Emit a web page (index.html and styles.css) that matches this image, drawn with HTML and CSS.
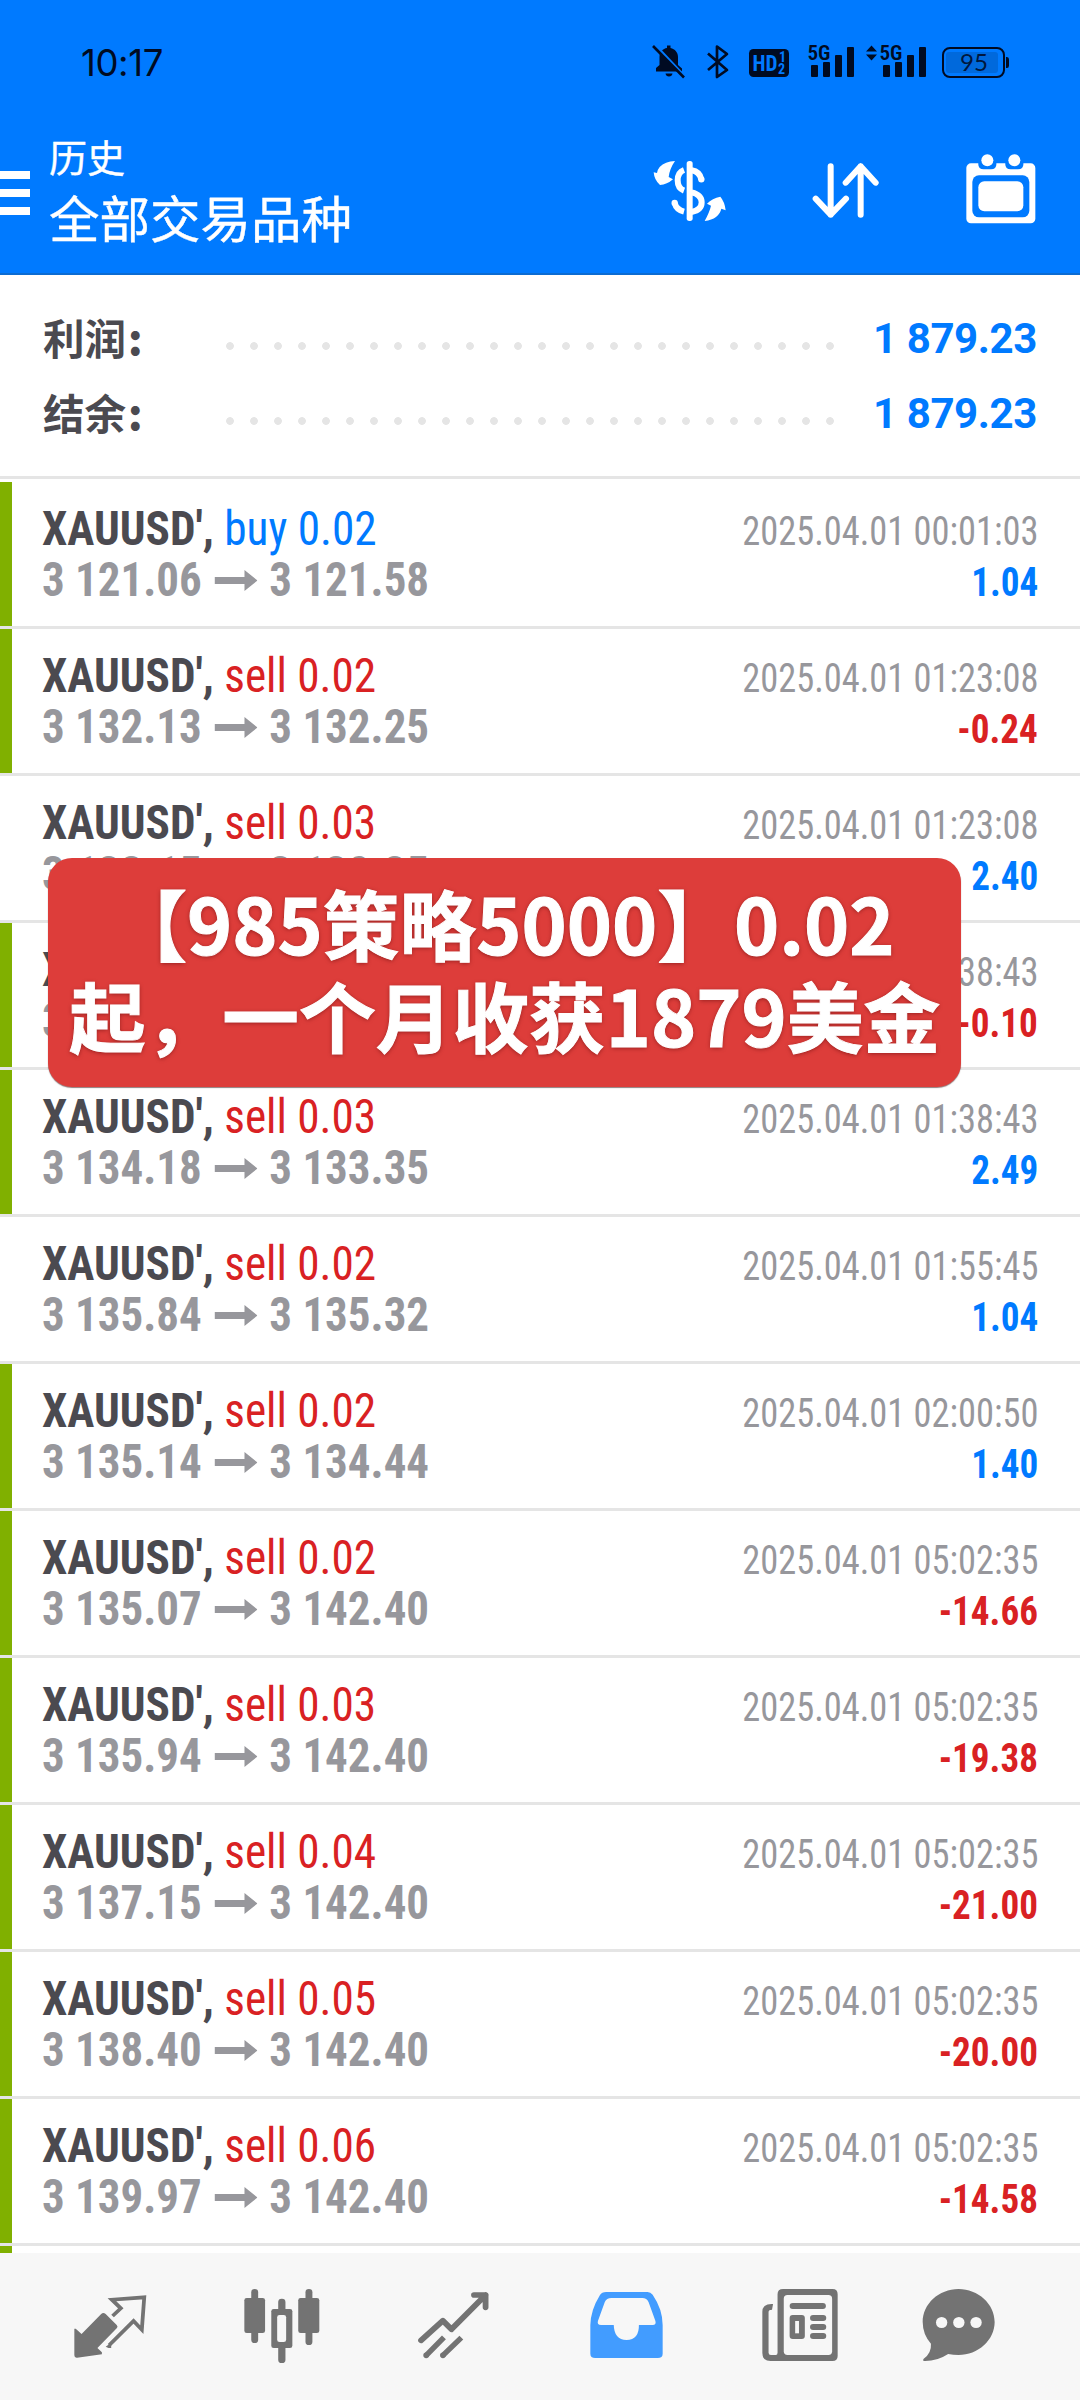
FILE: index.html
```
<!DOCTYPE html>
<html lang="zh-CN">
<head>
<meta charset="utf-8">
<title>历史</title>
<link rel="stylesheet" href="styles.css">
</head>
<body>
<div class="screen">
  <header class="header">
    <div class="status">
      <span class="clock">10:17</span>
      <svg class="status-icons" width="360" height="40" viewBox="650 42 360 40" fill="#000b22">
        <path d="M656 71.500v-3.500l3.500-3v-8c0-5 3.500-8.500 7.500-9v-2.500h3.500v2.500c4.500 1 7.500 4.500 7.500 9v8l4 3.500v3zM665.500 73.500h7q-.5 3-3.500 3t-3.500-3z"/>
        <path d="M655 45 686 78" stroke="#007aff" stroke-width="3"/>
        <path d="M653 46 684 77.500" stroke="#000b22" stroke-width="2.600"/>
        <path d="M708 53.500 727 70 717 77V46.500L727 54 708 70" fill="none" stroke="#000b22" stroke-width="2.700" stroke-linejoin="round"/>
        <rect x="749" y="49" width="40" height="28" rx="4.500"/>
        <g fill="#007aff" font-family="Roboto Condensed" font-weight="700">
          <text x="752.500" y="70.500" font-size="22" textLength="25" lengthAdjust="spacingAndGlyphs">HD</text>
          <text x="779" y="62" font-size="14">1</text><text x="778" y="73.500" font-size="14">2</text>
        </g>
        <g id="signal">
          <text x="807.500" y="60" font-size="21" font-family="Roboto Condensed" font-weight="600" textLength="23" lengthAdjust="spacingAndGlyphs">5G</text>
          <rect x="811" y="65" width="7" height="12" rx="1"/><rect x="823" y="62" width="7" height="15" rx="1"/><rect x="835" y="55" width="7" height="22" rx="1"/><rect x="847" y="47" width="7" height="30" rx="1"/>
        </g>
        <use href="#signal" x="72"/>
        <path d="M866 51.500 871.500 45.500 877 51.500zM866 54.500 871.500 60.500 877 54.500z"/>
        <rect x="943" y="48" width="61" height="29" rx="7" fill="none" stroke="#000b22" stroke-width="2"/>
        <rect x="946" y="52" width="52" height="21" rx="3" fill="#0069dc"/>
        <text x="960" y="71" font-size="24" font-family="Lato" fill="#00173d" textLength="28" lengthAdjust="spacingAndGlyphs">95</text>
        <path d="M1006 57h1q2 0 2 2.500v6q0 2.500-2 2.500h-1z"/>
      </svg>
    </div>
    <div class="toolbar">
      <div class="menu"><i></i><i></i><i></i></div>
      <div class="titles"><h2>历史</h2><h1>全部交易品种</h1></div>
      <div class="tools">
        <svg width="74" height="62" viewBox="100 420 222 186" fill="#fff">
          <path d="M166 423Q136 424 120 441Q114 448 112 459L102 457Q104 481 121 495Q142 494 160 478L147 471Q150 446 166 423Z"/>
          <path d="M255 603Q270 575 274 557L262 551Q278 535 302 530Q315 545 318 571L305 566Q298 597 255 603Z"/>
          <rect x="201" y="423" width="18" height="180" rx="8"/>
          <path d="M193 450Q174 457 174 481T193 512M193 575Q170 569 165 549" fill="none" stroke="#fff" stroke-width="18"/>
          <path d="M216 451Q240 455 245 478M216 517Q246 524 246 547T216 576" fill="none" stroke="#fff" stroke-width="18"/>
          <circle cx="165" cy="549" r="9.500"/><circle cx="245" cy="478" r="9.500"/>
        </svg>
        <svg width="68" height="56" viewBox="577 430 204 168" fill="none" stroke="#fff" stroke-width="18" stroke-linecap="round" stroke-linejoin="round">
          <path d="M633 440V585M588 537 633 585 679 537M723 585V440M678 489 723 440 768 489"/>
        </svg>
        <svg width="70" height="70" viewBox="1037 404 210 210">
          <rect x="1038" y="432" width="207" height="180" rx="14" fill="#fff"/>
          <path d="M1074 430Q1072 450 1090 450H1112Q1130 450 1128 430zM1155 430Q1153 450 1171 450H1193Q1211 450 1209 430z" fill="#007aff"/>
          <circle cx="1101" cy="423" r="18" fill="#fff"/><circle cx="1182" cy="423" r="18" fill="#fff"/>
          <rect x="1056" y="468" width="171" height="126" rx="20" fill="#007aff"/>
          <rect x="1074" y="486" width="135" height="90" rx="18" fill="#fff"/>
        </svg>
      </div>
    </div>
  </header>

  <section class="summary">
    <div class="sum"><span class="label">利润<b>:</b></span><span class="dots"></span><span class="total">1 879.23</span></div>
    <div class="sum"><span class="label">结余<b>:</b></span><span class="dots"></span><span class="total">1 879.23</span></div>
  </section>

  <svg class="defs" width="0" height="0"><symbol id="arrow" viewBox="0 0 43 21" preserveAspectRatio="none"><path d="M0 7H30V0L43 10.500 30 21V14H0z"/></symbol></svg>

  <main class="deals">
    <article class="deal win">
      <div class="line"><span class="symbol">XAUUSD', <span class="buy">buy 0.02</span></span><time>2025.04.01 00:01:03</time></div>
      <div class="line"><span class="price">3 121.06<svg><use href="#arrow"/></svg>3 121.58</span><span class="amount buy">1.04</span></div>
    </article>
    <article class="deal win">
      <div class="line"><span class="symbol">XAUUSD', <span class="sell">sell 0.02</span></span><time>2025.04.01 01:23:08</time></div>
      <div class="line"><span class="price">3 132.13<svg><use href="#arrow"/></svg>3 132.25</span><span class="amount sell">-0.24</span></div>
    </article>
    <article class="deal">
      <div class="line"><span class="symbol">XAUUSD', <span class="sell">sell 0.03</span></span><time>2025.04.01 01:23:08</time></div>
      <div class="line"><span class="price">3 133.15<svg><use href="#arrow"/></svg>3 132.35</span><span class="amount buy">2.40</span></div>
    </article>
    <article class="deal win">
      <div class="line"><span class="symbol">XAUUSD', <span class="sell">sell 0.02</span></span><time>2025.04.01 01:38:43</time></div>
      <div class="line"><span class="price">3 133.30<svg><use href="#arrow"/></svg>3 133.35</span><span class="amount sell">-0.10</span></div>
    </article>
    <article class="deal win">
      <div class="line"><span class="symbol">XAUUSD', <span class="sell">sell 0.03</span></span><time>2025.04.01 01:38:43</time></div>
      <div class="line"><span class="price">3 134.18<svg><use href="#arrow"/></svg>3 133.35</span><span class="amount buy">2.49</span></div>
    </article>
    <article class="deal">
      <div class="line"><span class="symbol">XAUUSD', <span class="sell">sell 0.02</span></span><time>2025.04.01 01:55:45</time></div>
      <div class="line"><span class="price">3 135.84<svg><use href="#arrow"/></svg>3 135.32</span><span class="amount buy">1.04</span></div>
    </article>
    <article class="deal win">
      <div class="line"><span class="symbol">XAUUSD', <span class="sell">sell 0.02</span></span><time>2025.04.01 02:00:50</time></div>
      <div class="line"><span class="price">3 135.14<svg><use href="#arrow"/></svg>3 134.44</span><span class="amount buy">1.40</span></div>
    </article>
    <article class="deal win">
      <div class="line"><span class="symbol">XAUUSD', <span class="sell">sell 0.02</span></span><time>2025.04.01 05:02:35</time></div>
      <div class="line"><span class="price">3 135.07<svg><use href="#arrow"/></svg>3 142.40</span><span class="amount sell">-14.66</span></div>
    </article>
    <article class="deal win">
      <div class="line"><span class="symbol">XAUUSD', <span class="sell">sell 0.03</span></span><time>2025.04.01 05:02:35</time></div>
      <div class="line"><span class="price">3 135.94<svg><use href="#arrow"/></svg>3 142.40</span><span class="amount sell">-19.38</span></div>
    </article>
    <article class="deal win">
      <div class="line"><span class="symbol">XAUUSD', <span class="sell">sell 0.04</span></span><time>2025.04.01 05:02:35</time></div>
      <div class="line"><span class="price">3 137.15<svg><use href="#arrow"/></svg>3 142.40</span><span class="amount sell">-21.00</span></div>
    </article>
    <article class="deal win">
      <div class="line"><span class="symbol">XAUUSD', <span class="sell">sell 0.05</span></span><time>2025.04.01 05:02:35</time></div>
      <div class="line"><span class="price">3 138.40<svg><use href="#arrow"/></svg>3 142.40</span><span class="amount sell">-20.00</span></div>
    </article>
    <article class="deal win">
      <div class="line"><span class="symbol">XAUUSD', <span class="sell">sell 0.06</span></span><time>2025.04.01 05:02:35</time></div>
      <div class="line"><span class="price">3 139.97<svg><use href="#arrow"/></svg>3 142.40</span><span class="amount sell">-14.58</span></div>
    </article>
    <div class="deal win"></div>
  </main>

  <nav class="tabs">
    <svg width="73" height="75" viewBox="214 204 212 225" preserveAspectRatio="none" fill="#737373">
      <path d="M215 326H219L236 342 293 282Q299 276 306 282L338 315Q343 320 338 325L282 384 295 397V403L223 413Q215 414 215 406Z"/>
      <path d="M326 288 350 265 324 239 418 232 411 329 387 303 316 376" fill="none" stroke="#737373" stroke-width="11"/>
      <path d="M306 380 314 384H322V374H314Z"/>
    </svg>
    <svg width="76" height="75" viewBox="708 204 220 225" preserveAspectRatio="none" fill="#737373">
      <rect x="729" y="207" width="20" height="162" rx="10"/><rect x="709" y="234" width="60" height="105" rx="7"/>
      <rect x="886" y="207" width="20" height="168" rx="10"/><rect x="865" y="234" width="61" height="105" rx="7"/>
      <rect x="807" y="236" width="21" height="193" rx="10"/><rect x="787" y="267" width="61" height="117" rx="7"/>
      <rect x="804" y="285" width="26" height="81" rx="7" fill="#f7f7f7"/>
    </svg>
    <svg width="71" height="75" viewBox="1213 204 208 225" preserveAspectRatio="none" fill="none" stroke="#737373" stroke-width="17" stroke-linejoin="round">
      <path d="M1222 361 1286 302 1311 328 1411 225M1377 225H1411V262" stroke-linecap="round"/>
      <path d="M1237 406 1289 352M1286 406 1340 353" stroke-width="16"/><path d="M1237 406v0M1286 406v0" stroke-linecap="round"/>
    </svg>
    <svg width="73" height="75" viewBox="145 204 212 225" preserveAspectRatio="none">
      <path d="M192 216H312Q321 216 327 224Q356 268 356 315V401Q356 414 342 414H160Q146 414 146 401V315Q147 270 174 225Q179 216 192 216Z" fill="#429cff"/>
      <path d="M207 234H297Q310 234 315 246L335 303Q338 315 327 315H287Q288 359 251 360Q215 359 214 315H177Q165 315 168 303L188 246Q193 234 207 234Z" fill="#f7f7f7"/>
    </svg>
    <svg width="76" height="75" viewBox="645 204 220 225" preserveAspectRatio="none" fill="#737373">
      <path d="M677 252 674 269Q664 269 664 276V398Q664 405 671 405H685Q690 405 690 398V223Q690 207 706 207H849Q864 207 864 223V408Q864 423 849 423H670Q646 423 646 399V275Q646 250 677 252Z"/>
      <rect x="708" y="225" width="140" height="180" rx="11" fill="#f7f7f7"/>
      <rect x="725" y="249" width="105" height="18" rx="9"/><rect x="725" y="285" width="44" height="72" rx="9"/><rect x="741" y="303" width="11" height="37" fill="#f7f7f7"/>
      <rect x="784" y="285" width="47" height="18" rx="9"/><rect x="784" y="312" width="47" height="18" rx="9"/><rect x="784" y="339" width="47" height="18" rx="9"/>
    </svg>
    <svg width="73" height="75" viewBox="1107 204 212 225" preserveAspectRatio="none">
      <path d="M1213 207C1270 207 1318 252 1318 306S1270 405 1213 405Q1198 405 1183 402Q1152 423 1116 423Q1107 423 1112 416Q1135 399 1133 371Q1109 343 1109 306C1109 252 1156 207 1213 207Z" fill="#737373"/>
      <g fill="#f7f7f7"><circle cx="1164" cy="307.500" r="16.500"/><circle cx="1214" cy="307.500" r="16.500"/><circle cx="1264" cy="307.500" r="16.500"/></g>
    </svg>
  </nav>

  <div class="banner">【985策略5000】0.02<br>起，一个月收获1879美金</div>
</div>
</body>
</html>
```
FILE: styles.css
```
* { box-sizing: border-box; }
body { margin: 0; background: #fff; }
.screen {
  position: relative;
  width: 1080px; height: 2400px;
  display: flex; flex-direction: column;
  overflow: hidden;
  background: #fff;
  font-family: "Roboto Condensed", "Noto Sans CJK SC", sans-serif;
}

.header { height: 275px; flex: none; background: #007aff; border-bottom: 2px solid #0c6cd2; }
.status { height: 124px; display: flex; justify-content: space-between; padding: 42px 70px 0 81px; }
.clock { font: 400 36.500px/42px Inter, sans-serif; letter-spacing: -.4px; color: #000b22; }
.status-icons { display: block; }
.toolbar { height: 149px; display: flex; color: #fff; }
.menu { width: 30px; padding-top: 47px; display: flex; flex-direction: column; gap: 10px; }
.menu i { height: 8px; background: #fff; }
.titles { margin-left: 19px; padding-top: 5px; flex: 1; }
.titles h1, .titles h2 { margin: 0; font-family: "Noto Sans CJK SC", sans-serif; font-weight: 400; -webkit-text-stroke: .4px #fff; }
.titles h2 { font-size: 38px; line-height: 54px; }
.titles h1 { font-size: 50.500px; line-height: 66px; }
.tools { display: flex; align-items: flex-start; padding: 30px 44.500px 0 0; }
.tools svg:nth-child(1) { margin: 6px 85px 0 0; }
.tools svg:nth-child(2) { margin: 9px 86px 0 0; }

.summary { height: 204px; flex: none; padding-top: 26px; border-bottom: 3px solid #e5e5e5; }
.sum { height: 75px; padding: 0 43px; display: flex; align-items: center; }
.label { width: 175px; margin-top: -4px; font: 700 41.500px/60px "Noto Sans CJK SC", sans-serif; color: #4b4a50; }
.label b { margin-left: 2px; }
.dots {
  width: 624px; height: 8px; margin-top: 15px;
  background: radial-gradient(circle, #e5e5e5 3.500px, transparent 4.200px) 0 0 / 24px 8px;
}
.total { flex: 1; text-align: right; font: 700 42px/60px Roboto, sans-serif; letter-spacing: -.4px; color: #007aff; }

.defs { position: absolute; }
.deals { flex: 1; min-height: 0; overflow: hidden; padding-top: 3px; }
.deal { height: 147px; padding: 21px 42px 0 30px; border-left: 12px solid transparent; background: linear-gradient(#e5e5e5, #e5e5e5) 0 100% / 100% 3px no-repeat border-box; }
.win { background: linear-gradient(#e5e5e5, #e5e5e5) 0 100% / 100% 3px no-repeat border-box, linear-gradient(#80b000, #80b000) 0 0 / 12px 144px no-repeat border-box; }
.line { height: 51px; display: flex; justify-content: space-between; align-items: baseline; line-height: 51px; white-space: nowrap; }
/* The list uses a narrower cut than the installed condensed face. */
.symbol, .price { font-size: 48px; font-weight: 700; transform-origin: 0 50%; }
.symbol { color: #4b4a50; transform: scaleX(.942); }
.symbol span { font-weight: 400; }
.price { color: #97979c; transform: scaleX(.937); }
.price svg { width: 46px; height: 21px; margin: 0 13px; vertical-align: 5px; fill: #97979c; }
time, .amount { font-size: 40px; transform-origin: 100% 50%; }
time { color: #97979c; transform: scaleX(.91); }
.amount { font-weight: 700; transform: scaleX(.928); }
.buy { color: #007aff; }
.sell { color: #d92123; }

.tabs { height: 147px; flex: none; background: #f7f7f7; padding: 35px 0 0 74px; display: grid; grid-template-columns: 170px 174px 172px 172px 160px 73px; }

.banner {
  position: absolute; left: 48px; top: 858px;
  width: 913px; height: 229px;
  padding-top: 18px;
  border-radius: 24px;
  background: #dd3d3a;
  box-shadow: 0 1px 1px rgba(70, 40, 40, .6);
  color: #fff; text-align: center; white-space: nowrap;
  font: 700 76.700px/92px "Noto Sans CJK SC", sans-serif;
  text-indent: -4px;
  -webkit-text-stroke: 1px #fff;
  text-shadow: 0 1px 4px rgba(90, 10, 10, .6);
}
```
